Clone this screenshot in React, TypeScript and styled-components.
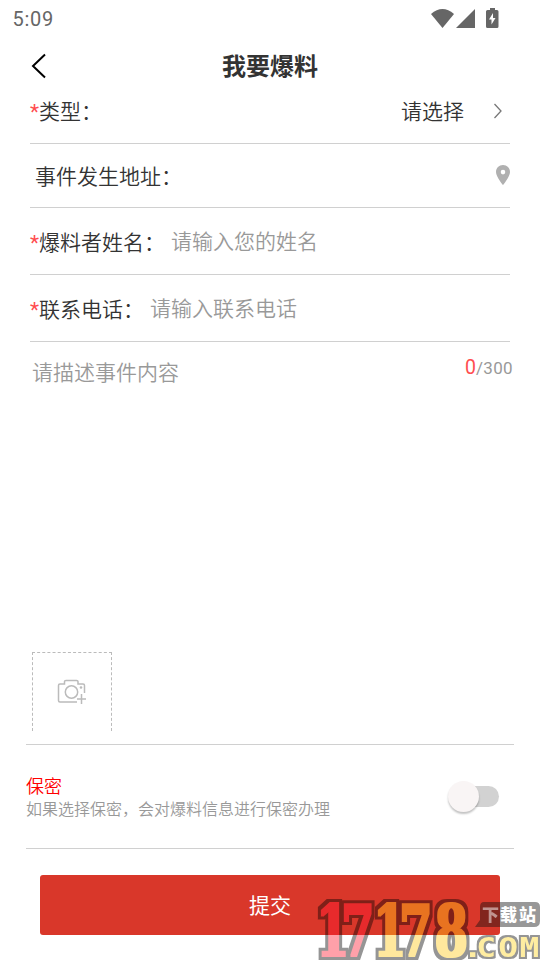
import React from "react";
import styled, { createGlobalStyle } from "styled-components";

const GlobalStyle = createGlobalStyle`
  * { box-sizing: border-box; }
  body { margin: 0; background: #fff; font-family: Roboto, "Noto Sans CJK SC", sans-serif; }
  svg { display: block; flex: none; }
`;

const Screen = styled.main`
  position: relative;
  width: 540px;
  height: 960px;
  overflow: hidden;
  display: flex;
  flex-direction: column;
  background: #fff;
  color: #333;
`;

const StatusBar = styled.div`
  height: 36px;
  flex: none;
  display: flex;
  align-items: center;
  justify-content: space-between;
  padding: 0 41px 0 12.5px;
  font-size: 20px;
  letter-spacing: 0.7px;
  color: #666;
`;

const Clock = styled.span`
  padding-top: 2px;
`;

const TitleBar = styled.header`
  height: 44px;
  flex: none;
  display: grid;
  grid-template-columns: 60px 1fr 60px;
  padding-top: 14px;
`;

const BackButton = styled.button`
  border: 0;
  padding: 0 0 0 31px;
  background: none;
  height: 32px;
`;

const Title = styled.h1`
  margin: 1px 0 0;
  font-size: 24px;
  line-height: 32px;
  text-align: center;
  font-weight: 700;
`;

const Form = styled.div`
  padding: 0 30px;
`;

const Row = styled.div<{ $height: number; $indent?: number; $drop?: number }>`
  height: ${(p) => p.$height}px;
  padding-top: ${(p) => p.$drop ?? 0}px;
  padding-left: ${(p) => p.$indent ?? 0}px;
  border-bottom: 1px solid #d0d0d0;
  display: flex;
  align-items: center;
  font-family: Roboto, "Noto Sans CJK SC DemiLight", "Noto Sans CJK SC", sans-serif;
  font-size: 21px;
  font-weight: 350;
  line-height: 30px;
`;

const Required = styled.span`
  color: #ff4d4f;
  font-weight: 400;
`;

const Hint = styled.span`
  margin: 0 0 2px 6px;
  color: #999;
`;

const Trailing = styled.div<{ $right?: number }>`
  margin-left: auto;
  margin-right: ${(p) => p.$right ?? 0}px;
  display: flex;
  align-items: center;
  gap: 29px;
`;

const Chevron = styled.svg`
  margin-bottom: 3px;
`;

const Pin = styled.svg`
  margin-bottom: 5px;
`;

const Description = styled.section`
  height: 310px;
  display: flex;
  justify-content: space-between;
  padding: 16px 27px 0 32px;
  font-size: 21px;
  font-weight: 350;
  line-height: 30px;
  color: #999;
`;

const Counter = styled.div`
  margin-top: -1px;
  font-size: 17px;
  font-weight: 400;
  line-height: 21px;
  letter-spacing: 0.35px;
`;

const Count = styled.span`
  font-size: 19.5px;
  letter-spacing: 0;
  color: #ff4d4f;
`;

const Uploader = styled.button`
  width: 80px;
  height: 79px;
  flex: none;
  margin-left: 32px;
  padding: 0;
  border: 1px dashed #bbb;
  border-bottom: 0;
  background: none;
  display: flex;
  align-items: center;
  justify-content: center;
`;

const Privacy = styled.section`
  height: 105px;
  flex: none;
  margin: 13px 26px 0;
  padding-right: 15px;
  border-top: 1px solid #d0d0d0;
  border-bottom: 1px solid #d0d0d0;
  display: flex;
  align-items: center;
  justify-content: space-between;
`;

const PrivacyText = styled.div`
  padding-top: 2px;
  font-weight: 350;
`;

const PrivacyTitle = styled.div`
  font-size: 18px;
  line-height: 24px;
  color: #f00;
`;

const PrivacyNote = styled.div`
  font-size: 16px;
  line-height: 22px;
  color: #999;
`;

const Track = styled.div`
  width: 47px;
  height: 21px;
  border-radius: 11px;
  background: #d2d2d2;
  display: flex;
  align-items: center;
`;

const Thumb = styled.div`
  width: 31px;
  height: 31px;
  flex: none;
  margin-left: -4px;
  border-radius: 50%;
  background: #f9f5f5;
  box-shadow: 0 2px 2px rgba(0, 0, 0, 0.24);
`;

const Submit = styled.button`
  width: 460px;
  height: 60px;
  flex: none;
  margin: 26px auto 0;
  padding: 2px 0 0;
  border: 0;
  border-radius: 3px;
  background: #d9372a;
  color: #fff;
  font: 400 21px/58px Roboto, "Noto Sans CJK SC", sans-serif;
`;

const Watermark = styled.svg`
  position: absolute;
  right: 0;
  bottom: 0;
  overflow: visible;
`;

function Outline({ id, body, rim }: { id: string; body: number; rim: number }) {
  return (
    <filter id={id} x="-20%" y="-20%" width="140%" height="140%" colorInterpolationFilters="sRGB">
      <feMorphology in="SourceAlpha" operator="dilate" radius={rim} result="rim" />
      <feMorphology in="SourceGraphic" operator="dilate" radius={body} result="body" />
      <feMerge>
        <feMergeNode in="rim" />
        <feMergeNode in={body > 0 ? "body" : "SourceGraphic"} />
      </feMerge>
    </filter>
  );
}

const NARROW = 0.68;
const at = (...xs: number[]) => xs.map((x) => x / NARROW).join(" ");

function SiteMark() {
  return (
    <Watermark width="230" height="70" viewBox="310 890 230 70">
      <defs>
        <Outline id="big" body={1} rim={4} />
        <Outline id="small" body={0} rim={2} />
      </defs>
      <g opacity="0.41" fontWeight="700">
        <g filter="url(#big)" fontFamily="DejaVu Serif" fontSize="71">
          <text transform={`translate(0 956) scale(${NARROW} 1)`} x={at(316, 341)} fill="#ff1a30">17</text>
          <text transform={`translate(0 956) scale(${NARROW} 1)`} x={at(373, 399, 434.5)} fill="#ffc914">178</text>
        </g>
        <g filter="url(#small)" fontFamily="DejaVu Sans Mono" fontSize="27">
          <text transform="translate(464 957) scale(1.22 1)" x="-1 10 28 45.500" fill="#ffd51d">.COM</text>
        </g>
      </g>
      <path d="M484 902h51q5 0 5 5v14q0 6-6 6h-59l5-7v-13q0-5 4-5z" fill="#111" opacity=".43" />
      <g fontFamily="Noto Sans CJK SC" fontWeight="900" fontSize="17">
        <text x="482" y="921" fill="#fff" opacity=".5">下</text>
        <text x="500" y="921" fill="#fff" textLength="36">载站</text>
      </g>
    </Watermark>
  );
}

export default function App() {
  return (
    <>
      <GlobalStyle />
      <Screen>
        <StatusBar>
          <Clock>5:09</Clock>
          <svg width="68" height="22" viewBox="431 6 68 22" fill="#666">
            <path d="M431 13q11.500-10 23 0l-11.500 14z" />
            <path d="M475 8v19h-19z" />
            <path fillRule="evenodd" d="M490 7h5v2h2q1.500 0 1.500 1.500v15q0 1.500-1.500 1.500h-9.500q-1.500 0-1.500-1.500v-15q0-1.500 1.500-1.500h2.500zM493 12l-4 6.500h2.500v5l4-6.500h-2.500z" />
          </svg>
        </StatusBar>
        <TitleBar>
          <BackButton aria-label="返回">
            <svg width="16" height="26" viewBox="0 0 16 26" fill="none" stroke="#000" strokeWidth="2">
              <path d="M14 1.500 2 13l12 11.500" />
            </svg>
          </BackButton>
          <Title>我要爆料</Title>
        </TitleBar>
        <Form>
          <Row $height={64} $drop={1}>
            <Required>*</Required>类型：
            <Trailing $right={7}>
              请选择
              <Chevron width="10" height="16" viewBox="0 0 10 16" fill="none" stroke="#777" strokeWidth="1.300">
                <path d="M1.500 1 8 8l-6.500 7" />
              </Chevron>
            </Trailing>
          </Row>
          <Row $height={64} $indent={5} $drop={3}>
            事件发生地址：
            <Trailing>
              <Pin width="14" height="20" viewBox="0 0 14 20">
                <path fill="#b0b0b0" fillRule="evenodd" d="M7 0C3 0 0 3 0 7c0 4.700 7 13 7 13s7-8.300 7-13c0-4-3-7-7-7zM7 4.800a2.300 2.300 0 1 1 0 4.600 2.300 2.300 0 0 1 0-4.600z" />
              </Pin>
            </Trailing>
          </Row>
          <Row $height={67} $drop={4}>
            <Required>*</Required>爆料者姓名：<Hint>请输入您的姓名</Hint>
          </Row>
          <Row $height={67} $drop={4}>
            <Required>*</Required>联系电话：<Hint>请输入联系电话</Hint>
          </Row>
        </Form>
        <Description>
          <span>请描述事件内容</span>
          <Counter><Count>0</Count>/300</Counter>
        </Description>
        <Uploader aria-label="添加图片">
          <svg width="30" height="26" viewBox="0 0 30 26" fill="none" stroke="#bbb" strokeWidth="1.500">
            <path d="M20 23H3q-1.500 0-1.500-1.500V6.500Q1.500 5 3 5h4.500V2.500Q7.500 1.500 9 1.500h10.500Q21 1.500 21 2.500V5h5q1.500 0 1.500 1.500V14M24.500 15v10M20 20h9" />
            <circle cx="14.500" cy="13" r="6.200" />
            <circle cx="24" cy="8.500" r="1.300" fill="#bbb" stroke="none" />
          </svg>
        </Uploader>
        <Privacy>
          <PrivacyText>
            <PrivacyTitle>保密</PrivacyTitle>
            <PrivacyNote>如果选择保密，会对爆料信息进行保密办理</PrivacyNote>
          </PrivacyText>
          <Track role="switch" aria-checked="false"><Thumb /></Track>
        </Privacy>
        <Submit>提交</Submit>
        <SiteMark />
      </Screen>
    </>
  );
}
